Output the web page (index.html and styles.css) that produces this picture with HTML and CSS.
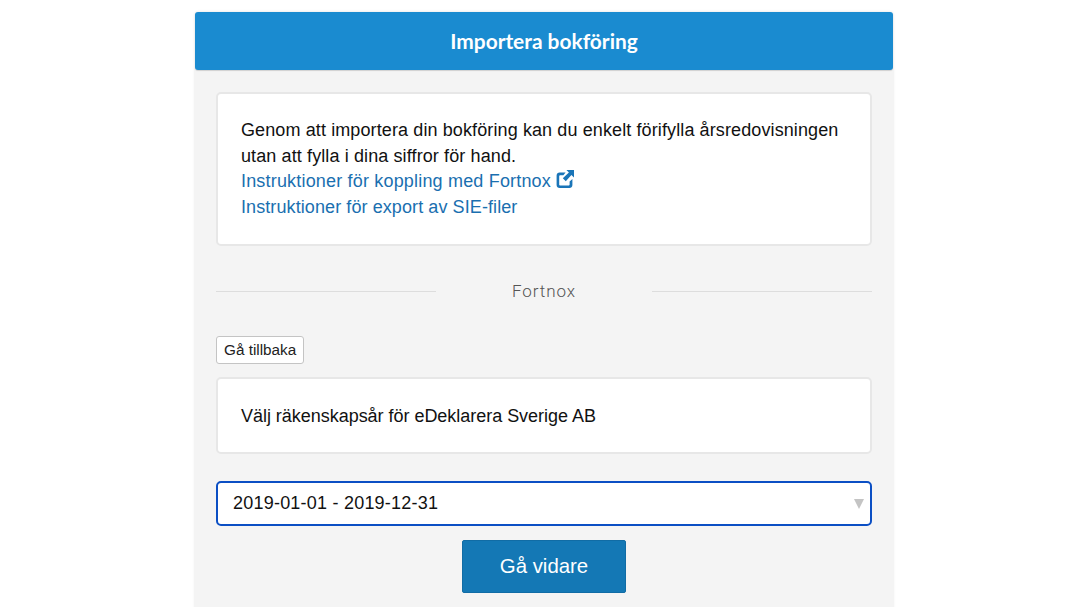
FILE: index.html
```html
<!doctype html>
<html lang="sv">
<head>
    <meta charset="UTF-8">
    <meta name="viewport" content="width=device-width, initial-scale=1.0">
    <title>Importera bokföring</title>
    <link rel="stylesheet" href="styles.css">
</head>
<body>
<div class="panel">
    <div class="panel_header">Importera bokföring</div>
    <div class="panel_body">
        <div class="card card_intro">
            Genom att importera din bokföring kan du enkelt förifylla årsredovisningen<br>
            utan att fylla i dina siffror för hand.<br>
            <a href="#">Instruktioner för koppling med Fortnox
                <svg class="ext_icon" viewBox="0 0 18 18" width="18" height="18">
                    <path fill="#1a75b8" d="M3.6 2.4H9.6L7.4 5.2H4.4C3.7 5.2 3.2 5.7 3.2 6.4v8c0 .7.5 1.2 1.2 1.2h8c.7 0 1.2-.5 1.2-1.2V11.6l2.8-2.6v6c0 1.7-1.3 3-3 3H3.6c-1.7 0-3-1.3-3-3V5.4c0-1.7 1.3-3 3-3z"/>
                    <path fill="#1a75b8" d="M10.4 0H18v7.6L15.4 5l-5.6 6.2-3-3L12.9 2.6z"/>
                </svg>
            </a><br>
            <a class="link_sie" href="#">Instruktioner för export av SIE-filer</a>
        </div>
        <div class="divider"><span>Fortnox</span></div>
        <button class="back_button">Gå tillbaka</button>
        <div class="card card_year">Välj räkenskapsår för eDeklarera Sverige AB</div>
        <div class="select_box">
            <span>2019-01-01 - 2019-12-31</span>
            <i class="select_arrow"></i>
        </div>
        <div class="actions">
            <button class="next_button">Gå vidare</button>
        </div>
    </div>
</div>
</body>
</html>
```

FILE: styles.css
```css
html, body {
    height: 100%;
}

body {
    margin: 0;
    background-color: #fff;
    font-family: "Liberation Sans", Arial, sans-serif;
    color: #111;
    overflow: hidden;
}

.panel {
    width: 698px;
    margin: 12px 0 0 195px;
    box-sizing: border-box;
    background-color: #f4f4f4;
    box-shadow: 0 0 3px rgba(0, 0, 0, 0.12);
    border-radius: 3px 3px 0 0;
}

.panel_header {
    height: 58px;
    line-height: 58px;
    background-color: #1a8bd0;
    border-radius: 3px;
    box-shadow: 0 1px 1px rgba(0, 0, 0, 0.15);
    color: #fff;
    font-family: Lato, sans-serif;
    font-size: 20.9px;
    font-weight: 700;
    text-align: center;
}

.panel_body {
    padding: 22px 21px 40px;
}

.card {
    background-color: #fff;
    border: 2px solid #e7e7e7;
    border-radius: 5px;
    box-sizing: border-box;
    font-size: 18px;
    padding-left: 23px;
}

.card_intro {
    height: 154px;
    padding-top: 24px;
    line-height: 25.7px;
    letter-spacing: 0.11px;
}

.card_intro a {
    color: #1a6fb0;
    text-decoration: none;
    letter-spacing: 0.18px;
}

.card_intro .link_sie {
    letter-spacing: 0.09px;
}

.ext_icon {
    vertical-align: -1px;
}

.divider {
    display: flex;
    align-items: center;
    justify-content: center;
    gap: 76px;
    margin-top: 34px;
    height: 22px;
    color: #555;
    font-family: Roboto, sans-serif;
    font-size: 17px;
    font-weight: 300;
    letter-spacing: 0.95px;
}

.divider::before, .divider::after {
    content: "";
    flex: 1;
    height: 1px;
    background-color: #ddd;
}

.back_button {
    display: block;
    margin-top: 34px;
    height: 28px;
    padding: 0 7px;
    background-color: #fff;
    border: 1px solid #c4c4c4;
    border-radius: 3px;
    color: #222;
    font-family: "Liberation Sans", Arial, sans-serif;
    font-size: 15.3px;
}

.card_year {
    height: 77px;
    margin-top: 13px;
    line-height: 75px;
    letter-spacing: -0.03px;
}

.select_box {
    position: relative;
    height: 45px;
    margin-top: 27px;
    padding-left: 15px;
    box-sizing: border-box;
    background-color: #fff;
    border: 2px solid #0b4fc4;
    border-radius: 5px;
    font-size: 18px;
    line-height: 41px;
    letter-spacing: 0.22px;
}

.select_arrow {
    position: absolute;
    right: 6px;
    top: 16px;
    border-left: 5px solid transparent;
    border-right: 5px solid transparent;
    border-top: 10px solid #c4c4c4;
}

.actions {
    display: flex;
    justify-content: center;
    margin-top: 14px;
}

.next_button {
    width: 164px;
    height: 53px;
    background-color: #1478b5;
    border: 1px solid #116ca5;
    border-radius: 2px;
    color: #fff;
    font-family: "Liberation Sans", Arial, sans-serif;
    font-size: 20.4px;
}
```
